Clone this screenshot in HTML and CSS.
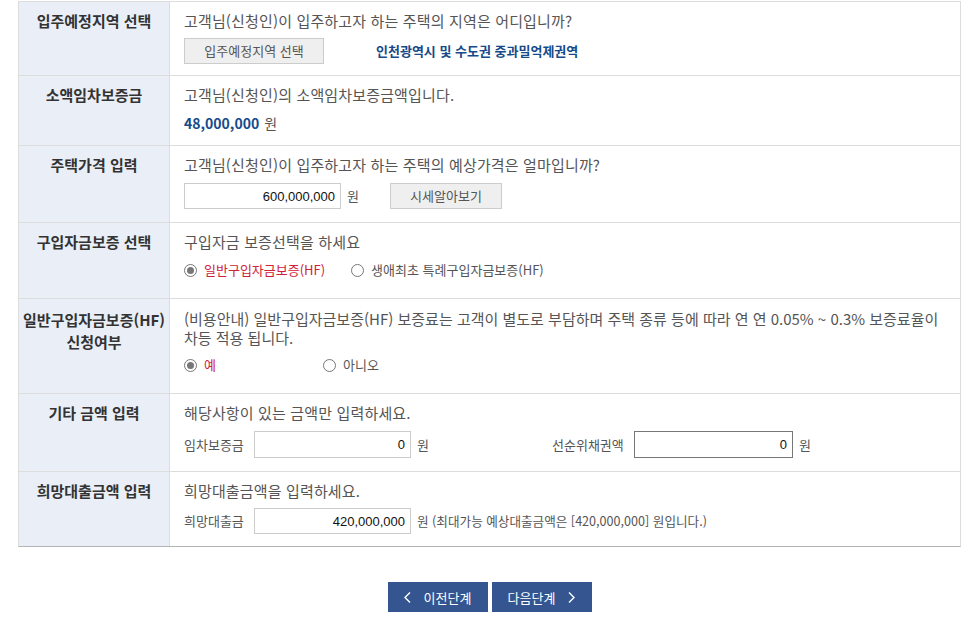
FILE: index.html
```html
<!DOCTYPE html>
<html lang="ko">
<head>
<meta charset="utf-8">
<title>대출 신청</title>
<link rel="stylesheet" href="styles.css">
</head>
<body>
<div class="page">
  <div class="form">
    <div class="row">
      <div class="label">입주예정지역 선택</div>
      <div class="cell r1">
        <p class="q">고객님(신청인)이 입주하고자 하는 주택의 지역은 어디입니까?</p>
        <div class="line mt7">
          <button class="btn-gray w140" type="button">입주예정지역 선택</button>
          <strong class="region">인천광역시 및 수도권 중과밀억제권역</strong>
        </div>
      </div>
    </div>
    <div class="row">
      <div class="label">소액임차보증금</div>
      <div class="cell r2">
        <p class="q">고객님(신청인)의 소액임차보증금액입니다.</p>
        <p class="amount mt8"><strong>48,000,000</strong><span class="unit14">원</span></p>
      </div>
    </div>
    <div class="row">
      <div class="label">주택가격 입력</div>
      <div class="cell r3">
        <p class="q">고객님(신청인)이 입주하고자 하는 주택의 예상가격은 얼마입니까?</p>
        <div class="line mt8">
          <input class="num" type="text" value="600,000,000">
          <span class="unit">원</span>
          <button class="btn-gray w112 ml31" type="button">시세알아보기</button>
        </div>
      </div>
    </div>
    <div class="row">
      <div class="label">구입자금보증 선택</div>
      <div class="cell r4">
        <p class="q">구입자금 보증선택을 하세요</p>
        <div class="line radios mt8">
          <label class="opt opt-a"><span class="radio on"></span><span class="red">일반구입자금보증(HF)</span></label>
          <label class="opt"><span class="radio"></span><span>생애최초 특례구입자금보증(HF)</span></label>
        </div>
      </div>
    </div>
    <div class="row">
      <div class="label l2">일반구입자금보증(HF)<br>신청여부</div>
      <div class="cell r5">
        <p class="para"><span class="nw">(비용안내) 일반구입자금보증(HF) 보증료는 고객이 별도로 부담하며 주택 종류 등에 따라 연 연 0.05% ~ 0.3% 보증료율이</span><br>차등 적용 됩니다.</p>
        <div class="line radios mt8">
          <label class="opt opt-yes"><span class="radio on"></span><span class="red">예</span></label>
          <label class="opt"><span class="radio"></span><span>아니오</span></label>
        </div>
      </div>
    </div>
    <div class="row">
      <div class="label">기타 금액 입력</div>
      <div class="cell r6">
        <p class="q">해당사항이 있는 금액만 입력하세요.</p>
        <div class="line mt8">
          <div class="field field-a">
            <span class="flabel">임차보증금</span>
            <input class="num h27" type="text" value="0">
            <span class="unit">원</span>
          </div>
          <div class="field">
            <span class="flabel w82">선순위채권액</span>
            <input class="num h27 w159 focus" type="text" value="0">
            <span class="unit">원</span>
          </div>
        </div>
      </div>
    </div>
    <div class="row">
      <div class="label">희망대출금액 입력</div>
      <div class="cell r7">
        <p class="q">희망대출금액을 입력하세요.</p>
        <div class="line mt7">
          <div class="field">
            <span class="flabel">희망대출금</span>
            <input class="num" type="text" value="420,000,000">
            <span class="unit note">원 (최대가능 예상대출금액은 [420,000,000] 원입니다.)</span>
          </div>
        </div>
      </div>
    </div>
  </div>

  <div class="actions">
    <button class="btn-step" type="button">
      <svg class="chev" width="7" height="11" viewBox="0 0 7 11"><polyline points="6,0.5 1,5.5 6,10.5" fill="none" stroke="#fff" stroke-width="1.4"/></svg>
      <span>이전단계</span>
    </button>
    <button class="btn-step" type="button">
      <span>다음단계</span>
      <svg class="chev" width="7" height="11" viewBox="0 0 7 11"><polyline points="1,0.5 6,5.5 1,10.5" fill="none" stroke="#fff" stroke-width="1.4"/></svg>
    </button>
  </div>
</div>
</body>
</html>
```

FILE: styles.css
```css
* {
  box-sizing: border-box;
  margin: 0;
  padding: 0;
}

html, body {
  background: #fff;
}

body {
  font-family: "Noto Sans CJK KR", "Malgun Gothic", sans-serif;
  color: #555;
  padding: 1px 0 0 18px;
}

.page {
  width: 943px;
}

.form {
  width: 943px;
  border: 1px solid #ddd;
  border-bottom-color: #b4b4b4;
}

.row {
  display: grid;
  grid-template-columns: 151px 1fr;
}

.row + .row {
  border-top: 1px solid #ddd;
}

.label {
  background: #eaeef6;
  border-right: 1px solid #ddd;
  color: #333;
  font-weight: bold;
  font-size: 15px;
  line-height: 22px;
  text-align: center;
  padding-top: 8px;
}

.label.l2 {
  padding-top: 10px;
}

.cell {
  padding: 9px 14px 0 14px;
  font-size: 15px;
  line-height: 20px;
}

.r1 { padding-bottom: 11px; }
.r2 { padding-bottom: 12px; }
.r3 { padding-bottom: 13px; }
.r4 { padding-bottom: 18px; }
.r5 { padding-bottom: 18px; }
.r6 { padding-bottom: 13px; }
.r7 { padding-bottom: 12px; }

.q {
  color: #555;
  height: 20px;
  letter-spacing: 0.15px;
}

.para {
  margin-top: 1px;
  line-height: 19px;
  color: #555;
}

.nw {
  white-space: nowrap;
}

.mt7 { margin-top: 7px; }
.mt8 { margin-top: 8px; }
.mt9 { margin-top: 9px; }

.line {
  display: flex;
  align-items: center;
}

.btn-gray {
  height: 26px;
  border: 1px solid #ccc;
  background: #efefef;
  color: #555;
  font-family: inherit;
  font-size: 13px;
  line-height: 24px;
  text-align: center;
}

.w140 { width: 140px; }
.w112 { width: 112px; }
.ml31 { margin-left: 31px; }

.region {
  margin-left: 52px;
  color: #164a8a;
  font-size: 13px;
  font-weight: bold;
}

.amount {
  display: flex;
  align-items: center;
  height: 20px;
}

.amount strong {
  color: #164a8a;
  font-weight: bold;
  font-size: 14px;
}

.unit14 {
  margin-left: 5px;
  font-size: 14px;
  color: #555;
}

.num {
  width: 157px;
  height: 26px;
  border: 1px solid #ccc;
  background: #fff;
  padding: 0 5px 0 4px;
  text-align: right;
  font-family: "Liberation Sans", Arial, sans-serif;
  font-size: 13px;
  color: #111;
  outline: none;
}

.num.h27 { height: 27px; }
.num.w159 { width: 159px; }
.num.focus { border-color: #777; }

.unit {
  margin-left: 6px;
  font-size: 13px;
  color: #555;
}

.unit.note {
  font-size: 12.6px;
}

.radios {
  height: 20px;
  font-size: 13px;
}

.opt {
  display: inline-flex;
  align-items: center;
  color: #555;
}

.opt-a { margin-right: 26px; }
.opt-yes { width: 139px; }

.radio {
  width: 13px;
  height: 13px;
  border: 1px solid #777;
  border-radius: 50%;
  background: #fff;
  margin-right: 7px;
  display: inline-flex;
  align-items: center;
  justify-content: center;
}

.radio.on::after {
  content: "";
  width: 7px;
  height: 7px;
  border-radius: 50%;
  background: #777;
}

.red {
  color: #d0213a;
}

.field {
  display: flex;
  align-items: center;
}

.field-a {
  width: 368px;
}

.flabel {
  width: 70px;
  font-size: 13px;
  color: #555;
}

.flabel.w82 {
  width: 82px;
}

.actions {
  display: flex;
  justify-content: center;
  gap: 4px;
  margin-top: 35px;
}

.btn-step {
  width: 100px;
  height: 30px;
  border: 0;
  background: #34558f;
  color: #fff;
  font-family: inherit;
  font-size: 13px;
  display: flex;
  align-items: center;
  justify-content: center;
  gap: 13px;
}

.chev {
  display: block;
}
```
